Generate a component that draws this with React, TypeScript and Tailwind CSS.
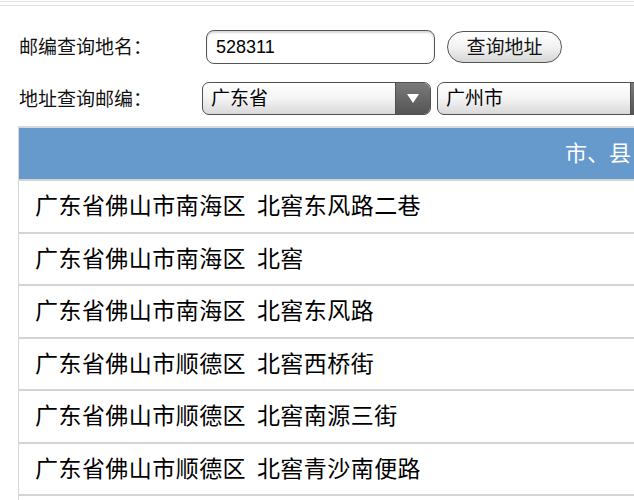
import React from "react";

const rows = [
  "广东省佛山市南海区 北窖东风路二巷",
  "广东省佛山市南海区 北窖",
  "广东省佛山市南海区 北窖东风路",
  "广东省佛山市顺德区 北窖西桥街",
  "广东省佛山市顺德区 北窖南源三街",
  "广东省佛山市顺德区 北窖青沙南便路",
  "广东省佛山市顺德区 北窖",
];

function Select({ value }: { value: string }) {
  return (
    <div className="flex h-[33px] w-[229px] shrink-0 overflow-hidden rounded-[7px] border border-[#505050] bg-gradient-to-b from-white via-[#f4f4f4] to-[#d9d9d9]">
      <div className="flex flex-1 items-center pl-[8px] pt-[2px] text-[19px] text-black">{value}</div>
      <div className="flex w-[35px] items-center justify-center border-l border-[#505050] bg-gradient-to-b from-[#7a7a7a] to-[#555]">
        <svg width="14" height="11" viewBox="0 0 14 11">
          <polygon points="1,1 13,1 7,10" fill="#fff" />
        </svg>
      </div>
    </div>
  );
}

export default function App() {
  return (
    <div
      className="relative h-[500px] w-[634px] overflow-hidden bg-white"
      style={{ fontFamily: '"Liberation Sans", "Noto Sans CJK SC", sans-serif' }}
    >
      <div className="mt-[1px] h-[5px] border-y border-[#e2e2e2]" />
      <div className="ml-[19px] mt-[24px] flex h-[34px] w-[800px] items-center">
        <div className="w-[187px] shrink-0 pt-[3px] text-[19px] text-[#111]">邮编查询地名：</div>
        <div className="flex h-[34px] w-[229px] shrink-0 items-center rounded-[8px] border-[1.5px] border-[#555] bg-white pl-[9px] text-[18px] text-black shadow-[inset_0_2px_2px_rgba(0,0,0,0.15)]">
          528311
        </div>
        <button className="ml-[12px] flex h-[32px] w-[115px] shrink-0 items-center justify-center rounded-full border-[1.5px] border-[#555] bg-gradient-to-b from-white via-[#f2f2f2] to-[#d6d6d6] pt-[2px] text-[19px] text-[#111]">
          查询地址
        </button>
      </div>
      <div className="ml-[19px] mt-[18px] flex h-[33px] w-[800px] items-center">
        <div className="w-[183px] shrink-0 pt-[3px] text-[19px] text-[#111]">地址查询邮编：</div>
        <Select value="广东省" />
        <div className="ml-[6px] shrink-0">
          <Select value="广州市" />
        </div>
      </div>
      <div className="ml-[18px] mt-[11px] w-[800px] border-l border-t-2 border-[#d8d8d8]">
        <div className="flex h-[51px] items-center bg-[#6699cc] text-[22px] text-white">
          <div className="w-[528px] shrink-0" />
          <div className="pl-[18px]">市、县</div>
        </div>
        {rows.map((r, i) => (
          <div
            key={i}
            className="flex h-[52.5px] items-center border-t-2 border-[#d4d4d4] pl-[16px] text-[23px] tracking-[0.45px] text-black [word-spacing:4px]"
          >
            {r}
          </div>
        ))}
      </div>
    </div>
  );
}
